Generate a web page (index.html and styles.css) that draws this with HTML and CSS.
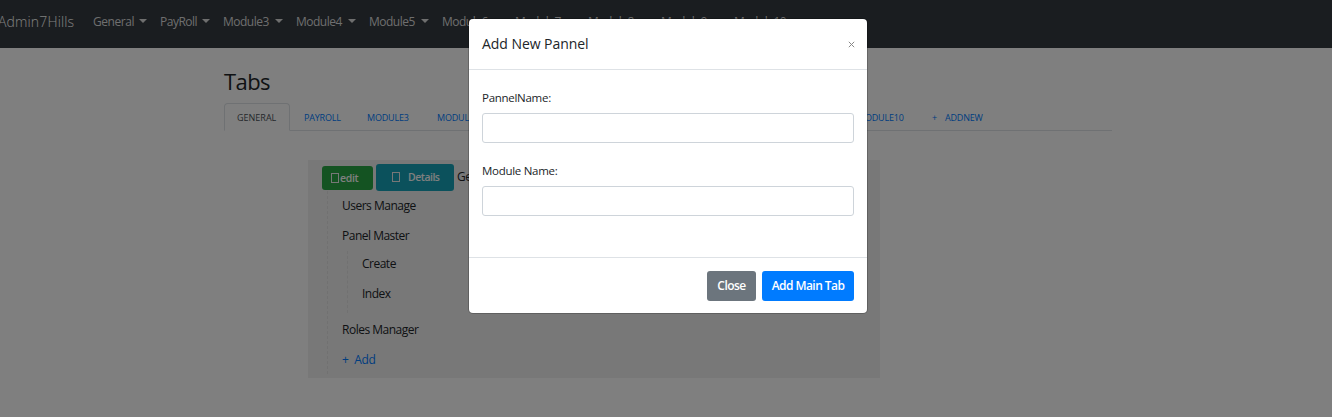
FILE: index.html
```html
<!DOCTYPE html>
<html lang="en">
<head>
<meta charset="utf-8">
<title>Admin7Hills</title>
<link rel="stylesheet" href="styles.css">
</head>
<body>
<nav class="navbar">
  <a class="brand">Admin7Hills</a>
  <ul class="menu">
    <li class="general"><span>General</span></li>
    <li class="payroll"><span>PayRoll</span></li>
    <li><span>Module3</span></li>
    <li><span>Module4</span></li>
    <li><span>Module5</span></li>
    <li><span>Module6</span></li>
    <li><span>Module7</span></li>
    <li><span>Module8</span></li>
    <li><span>Module9</span></li>
    <li><span>Module10</span></li>
  </ul>
</nav>
<main class="container">
  <h2 class="title">Tabs</h2>
  <ul class="tabs">
    <li class="active">General</li>
    <li class="tab-payroll">PayRoll</li>
    <li>Module3</li>
    <li>Module4</li>
    <li>Module5</li>
    <li>Module6</li>
    <li>Module7</li>
    <li>Module8</li>
    <li>Module9</li>
    <li class="tab-ten">Module10</li>
    <li class="tab-add"><span>+</span><span>AddNew</span></li>
  </ul>
  <section class="panel">
    <div class="panel-head">
      <button class="btn-edit"><i class="glyph"></i>edit</button>
      <button class="btn-details"><i class="glyph"></i>Details</button>
      <span class="panel-name">General</span>
    </div>
    <ul class="tree">
      <li>Users Manage</li>
      <li>Panel Master</li>
      <li class="nested">
        <ul class="subtree">
          <li>Create</li>
          <li>Index</li>
        </ul>
      </li>
      <li>Roles Manager</li>
      <li class="add">+&nbsp; Add</li>
    </ul>
  </section>
</main>
<div class="backdrop">
  <div class="modal">
    <header class="modal-head">
      <h5>Add New Pannel</h5>
      <svg class="close" viewBox="0 0 7 7"><path d="M.8.8l5.4 5.4M6.2.8L.8 6.2"/></svg>
    </header>
    <div class="modal-body">
      <label><span>PannelName:</span><input type="text"></label>
      <label class="second"><span>Module Name:</span><input type="text"></label>
    </div>
    <footer class="modal-foot">
      <button class="btn btn-close">Close</button>
      <button class="btn btn-primary">Add Main Tab</button>
    </footer>
  </div>
</div>
</body>
</html>
```
FILE: styles.css
```css
* { box-sizing: border-box; }
body {
  margin: 0;
  height: 417px;
  overflow: hidden;
  background: #fff;
  color: #212529;
  font: 300 12px/18px "Open Sans", "Noto Sans", sans-serif;
}
ul { list-style: none; margin: 0; padding: 0; }
h2, h5 { margin: 0; font-weight: 400; }
button { font-family: inherit; border: 0; margin: 0; }

.navbar {
  height: 48px;
  display: flex;
  align-items: center;
  padding-bottom: 4px;
  background: #343a40;
  color: #fff;
  white-space: nowrap;
}
.brand { width: 93px; margin-left: -2px; font-size: 14px; font-weight: 350; letter-spacing: .15px; }
.menu { display: flex; font-size: 12px; font-weight: 400; color: #ddd; margin-left: 2px; }
.menu li { width: 73px; display: flex; align-items: center; letter-spacing: -.5px; }
.menu .general { width: 67px; }
.menu .general span { width: 40px; letter-spacing: -.45px; }
.menu .payroll { width: 63px; }
.menu .payroll span { width: 36px; letter-spacing: -.5px; }
.menu li::after {
  content: "";
  margin: -2px 0 0 6px;
  border: 4px solid transparent;
  border-top-color: #ddd;
  border-bottom: 0;
}

.container { width: 888px; margin: 0 0 0 224px; padding-top: 20px; }
.title { height: 35px; font-size: 22px; line-height: 27px; letter-spacing: -.6px; }
.tabs {
  display: flex;
  height: 28px;
  border-bottom: 1px solid #dee2e6;
  font-size: 9px;
  font-weight: 400;
  line-height: 30px;
  text-transform: uppercase;
  color: #007bff;
  white-space: nowrap;
}
.tabs li { width: 70px; padding-left: 14px; letter-spacing: -.18px; }
.tabs .active {
  width: 66px;
  height: 28px;
  padding-left: 12px;
  border: 1px solid #dee2e6;
  border-bottom-color: #fff;
  border-radius: 4px 4px 0 0;
  color: #495057;
  line-height: 28px;
  letter-spacing: 0;
}
.tabs .tab-payroll { width: 63px; }
.tabs .tab-ten { width: 75px; }
.tabs .tab-add { display: flex; gap: 8px; }

.panel {
  width: 572px;
  height: 218px;
  margin: 29px 0 0 84px;
  padding: 4px 14px 0;
  background: #f0f0f0;
}
.panel-head { display: flex; align-items: center; height: 27px; font-weight: 400; }
.btn-edit, .btn-details {
  display: flex;
  align-items: center;
  border-radius: 3px;
  color: #fff;
  font-size: 10.5px;
  font-weight: 600;
}
.btn-edit { width: 51px; height: 24px; padding: 0 0 0 9px; margin: 1px 3px 0 0; background: #28a745; letter-spacing: -.3px; }
.btn-edit .glyph { margin-right: 1px; }
.btn-details { width: 78px; height: 27px; padding: 0 0 1px 16px; margin-right: 3px; background: #17a2b8; letter-spacing: -.5px; }
.glyph { flex: none; width: 8px; height: 10px; border: 1px solid #eee; }
.btn-details .glyph { margin-right: 8px; }
.panel-name { margin-top: -2px; font-size: 12px; letter-spacing: -.4px; }
.tree { margin-left: 5px; padding-left: 14px; border-left: 1px dashed #e2e2e2; height: 183px; font-size: 12px; font-weight: 400; letter-spacing: -.5px; color: #212529; }
.tree > li { height: 30px; line-height: 30px; }
.tree > .nested { height: 64px; padding: 0 0 0 5px; }
.subtree { height: 62px; padding-left: 14px; border-left: 1px dashed #e2e2e2; }
.subtree li { height: 30px; line-height: 26px; }
.tree > .add { color: #007bff; letter-spacing: -.3px; }

.backdrop {
  position: absolute;
  inset: 0;
  padding-top: 19px;
  background: rgba(0, 0, 0, .5);
}
.modal {
  width: 398px;
  height: 294px;
  margin-left: 469px;
  border-radius: 4px;
  background: #fff;
  box-shadow: 0 0 0 1px rgba(0, 0, 0, .2);
}
.modal-head {
  display: flex;
  justify-content: space-between;
  align-items: center;
  height: 51px;
  padding: 0 12px 0 13px;
  border-bottom: 1px solid #dee2e6;
}
.modal-head h5 { font-size: 14px; letter-spacing: -.05px; }
.close { width: 7px; height: 7px; fill: none; stroke: #888; }
.modal-body { height: 187px; padding: 19px 13px 0; }
.modal-body label { display: block; }
.modal-body label span { display: block; height: 24px; font-size: 11.5px; font-weight: 400; letter-spacing: -.28px; }
.modal-body .second { margin-top: 19px; }
.modal-body input {
  display: block;
  width: 372px;
  height: 30px;
  border: 1px solid #ced4da;
  border-radius: 3px;
  background: #fff;
}
.modal-foot {
  display: flex;
  justify-content: flex-end;
  gap: 6px;
  height: 56px;
  padding: 13px 13px 0;
  border-top: 1px solid #dee2e6;
}
.btn { height: 30px; padding: 0 0 1px; border-radius: 3px; color: #fff; font-size: 12px; font-weight: 550; letter-spacing: -.55px; white-space: nowrap; }
.btn-close { width: 49px; background: #6c757d; }
.btn-primary { width: 92px; background: #007bff; }
```
